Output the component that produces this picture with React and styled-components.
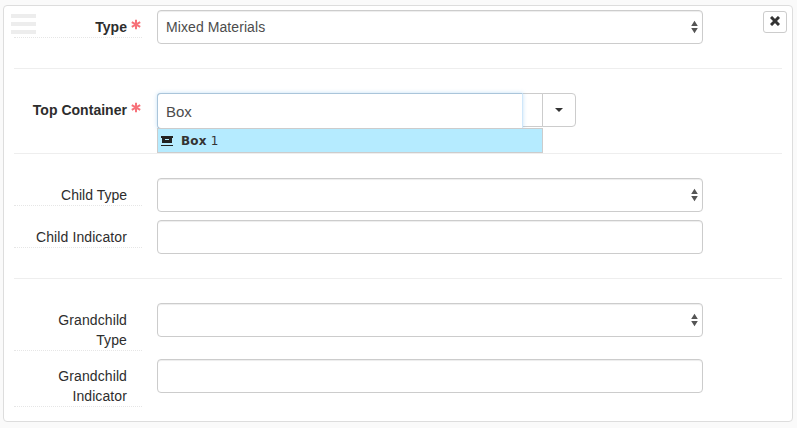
import React from "react";
import styled, { createGlobalStyle } from "styled-components";

const Global = createGlobalStyle`
  * { box-sizing: border-box; }
  body {
    margin: 0;
    background: #fafafa;
    font: 14px/20px "Liberation Sans", Arial, sans-serif;
    color: #333;
    overflow: hidden;
  }
`;

const Card = styled.main`
  position: relative;
  width: 790px;
  height: 417px;
  margin: 5px 0 0 3px;
  padding: 4px 10px 0;
  background: #fff;
  border: 1px solid #ddd;
  border-radius: 4px;
`;

const DragHandle = styled.div`
  position: absolute;
  left: 7px;
  top: 8px;
  width: 25px;
  display: grid;
  gap: 4px;
`;

const HandleBar = styled.span`
  height: 4px;
  background: #ededed;
`;

const CloseButton = styled.button`
  position: absolute;
  right: 5px;
  top: 5px;
  width: 24px;
  height: 22px;
  padding: 0 0 2px;
  display: flex;
  align-items: center;
  justify-content: center;
  background: #fff;
  border: 1px solid #ccc;
  border-radius: 3px;
`;

const Section = styled.section`
  display: grid;
  gap: 8px;
  width: 768px;
  height: ${(p) => p.$height}px;
  align-content: start;
`;

const Divider = styled.hr`
  width: 768px;
  height: 1px;
  margin: 0 0 24px;
  border: 0;
  background: #eee;
`;

const Row = styled.div`
  display: grid;
  grid-template-columns: 128px 546px;
  column-gap: 15px;
  align-items: start;
`;

const Label = styled.label`
  position: relative;
  padding: 7px 15px 0 20px;
  text-align: right;
  color: #2d2d2d;
  font-weight: ${(p) => (p.$required ? 700 : 400)};
  letter-spacing: ${(p) => p.$spacing || 0}px;
  border-bottom: ${(p) => (p.$noLine ? "0" : "1px dotted #e6e6e6")};
`;

const RequiredLabel = styled(Label)`
  padding-left: 0;
  letter-spacing: 0.03px;
`;

const Star = styled.svg`
  position: absolute;
  right: 1px;
  top: 9px;
  width: 10px;
  height: 11px;
`;

const Field = styled.div`
  display: flex;
  align-items: center;
  justify-content: space-between;
  height: 34px;
  padding: 0 4px 0 8px;
  color: #4c4c4c;
  background: #fff;
  border: 1px solid #ccc;
  border-radius: 4px;
  box-shadow: inset 0 1px 1px rgba(0, 0, 0, 0.075);
`;

const FieldText = styled.span`
  letter-spacing: 0.08px;
`;

const Combo = styled.div`
  position: relative;
  display: flex;
  width: 419px;
  height: 34px;
`;

const ComboBody = styled.div`
  width: 386px;
  border: 1px solid #ccc;
  border-right: 0;
  border-radius: 4px 0 0 4px;
`;

const ComboInput = styled.div`
  width: 366px;
  height: 36px;
  margin: -1px 0 0 -1px;
  padding: 8px 8px 0;
  font-size: 15px;
  color: #4c4c4c;
  background: #fff;
  border: 1px solid #aac5da;
  border-right-color: #cfe7fa;
  border-radius: 4px 0 0 4px;
  box-shadow: 0 0 4px rgba(102, 175, 233, 0.38);
`;

const ComboToggle = styled.button`
  width: 34px;
  height: 34px;
  margin-left: -1px;
  padding: 0;
  display: flex;
  align-items: center;
  justify-content: center;
  background: #fff;
  border: 1px solid #ccc;
  border-radius: 0 4px 4px 0;
`;

const Menu = styled.div`
  position: absolute;
  left: 0;
  top: 35px;
  width: 386px;
  height: 25px;
  display: flex;
  align-items: center;
  padding: 0 3px;
  font: 12px/20px "DejaVu Sans", sans-serif;
  background: #b5ebff;
  border: 1px solid #ccc;
`;

const MenuIcon = styled.svg`
  width: 12px;
  height: 11px;
  margin: 0 8px 0 0;
`;

const MenuText = styled.span`
  letter-spacing: 0.2px;
`;

function Asterisk() {
  return (
    <Star viewBox="0 0 10 11" stroke="#f77179" strokeWidth="2">
      <path d="M5 .8v9.4M.8 3.1l8.4 4.8M9.2 3.1L.8 7.9" />
    </Star>
  );
}

function SelectArrows() {
  return (
    <svg width="7" height="14" viewBox="0 0 7 14" fill="#555">
      <path d="M3.5 .7L6.8 6H.2zM3.5 13.3L.2 8h6.6z" />
    </svg>
  );
}

function BoxIcon() {
  return (
    <MenuIcon viewBox="0 0 12 11">
      <path fill="#222" d="M0 1h12v2H0zM1 3h10v5H1zM0 10h12v1H0z" />
      <path fill="#b5ebff" d="M4 4h4v1H4z" />
    </MenuIcon>
  );
}

function FormRow({ label, select, value, required, spacing = 0.1 }) {
  const RowLabel = required ? RequiredLabel : Label;
  return (
    <Row>
      <RowLabel $required={required} $spacing={spacing}>
        {label}
        {required && <Asterisk />}
      </RowLabel>
      <Field>
        <FieldText>{value}</FieldText>
        {select && <SelectArrows />}
      </Field>
    </Row>
  );
}

export default function App() {
  return (
    <>
      <Global />
      <Card>
        <DragHandle>
          <HandleBar />
          <HandleBar />
          <HandleBar />
        </DragHandle>
        <CloseButton aria-label="Remove">
          <svg width="10" height="10" viewBox="0 0 10 10">
            <path d="M1 1l8 8M9 1L1 9" stroke="#333" strokeWidth="3" />
          </svg>
        </CloseButton>
        <Section $height={58}>
          <FormRow label="Type" value="Mixed Materials" select required />
        </Section>
        <Divider />
        <Section $height={60}>
          <Row>
            <RequiredLabel $required $noLine>
              Top Container
              <Asterisk />
            </RequiredLabel>
            <Combo>
              <ComboBody>
                <ComboInput>Box</ComboInput>
              </ComboBody>
              <ComboToggle aria-label="Show options">
                <svg width="8" height="4" viewBox="0 0 8 4">
                  <path d="M0 0h8L4 4z" fill="#333" />
                </svg>
              </ComboToggle>
              <Menu>
                <BoxIcon />
                <MenuText>
                  <b>Box</b> 1
                </MenuText>
              </Menu>
            </Combo>
          </Row>
        </Section>
        <Divider />
        <Section $height={100}>
          <FormRow label="Child Type" select spacing={0} />
          <FormRow label="Child Indicator" />
        </Section>
        <Divider />
        <Section $height={110}>
          <FormRow label="Grandchild Type" select />
          <FormRow label="Grandchild Indicator" />
        </Section>
      </Card>
    </>
  );
}
